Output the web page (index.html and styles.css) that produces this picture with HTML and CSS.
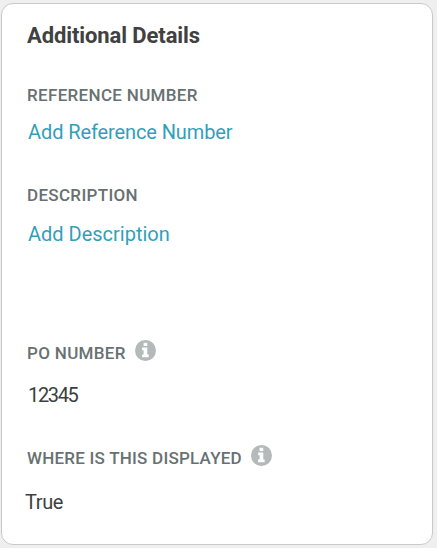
FILE: index.html
```html
<!DOCTYPE html>
<html lang="en">
<head>
<meta charset="utf-8">
<title>Additional Details</title>
<link rel="stylesheet" href="styles.css">
</head>
<body>
<main class="card">
<h1 class="title">Additional Details</h1>
<section class="field reference">
<h2 class="label">REFERENCE NUMBER</h2>
<a class="value link" href="#">Add Reference Number</a>
</section>
<section class="field description">
<h2 class="label">DESCRIPTION</h2>
<a class="value link" href="#">Add Description</a>
</section>
<section class="field po">
<h2 class="label">PO NUMBER
<svg class="info" viewBox="0 0 20 20"><circle cx="10" cy="10" r="10"/><path d="M8.2 2.5h3.5v3.2H8.2zM6.8 7.2h4.9v6.7H13v2.6H6.8v-2.6h1.4V9.8H6.8z"/></svg></h2>
<p class="value">12345</p>
</section>
<section class="field where">
<h2 class="label">WHERE IS THIS DISPLAYED
<svg class="info" viewBox="0 0 20 20"><circle cx="10" cy="10" r="10"/><path d="M8.2 2.5h3.5v3.2H8.2zM6.8 7.2h4.9v6.7H13v2.6H6.8v-2.6h1.4V9.8H6.8z"/></svg></h2>
<p class="value">True</p>
</section>
</main>
</body>
</html>
```
FILE: styles.css
```css
* { box-sizing: border-box; }
body { margin: 0; background: #efefef; font-family: Roboto, sans-serif; }
.card { width: 432px; height: 542px; margin: 3px 0 0 1px; padding: 18px 25px; background: #fff; border: 1px solid #c8caca; border-radius: 12px; }
.title { margin: 0; font-size: 22px; line-height: 28px; letter-spacing: -0.1px; color: #414141; font-weight: 700; }
.field { display: flex; flex-direction: column; align-items: flex-start; }
.label { display: flex; align-items: center; gap: 9px; margin: 0; font-size: 17px; line-height: 22px; letter-spacing: 0.32px; color: #687172; font-weight: 500; white-space: nowrap; }
.value { margin: 0; padding-left: 1px; font-size: 20px; line-height: 28px; color: #3b3f40; text-decoration: none; }
.link { color: #329fb9; }
.info { width: 21px; height: 21px; fill: #b3bab9; position: relative; top: -3px; }
.info path { fill: #fff; }
.reference { margin-top: 34px; }
.reference .value { margin-top: 12px; letter-spacing: -0.1px; }
.description { margin-top: 38px; }
.description .value { margin-top: 14px; }
.po { margin-top: 94px; }
.po .value { margin-top: 17px; letter-spacing: -1.35px; }
.where { margin-top: 38px; }
.where .label { letter-spacing: 0.23px; }
.where .value { margin: 19px 0 0 -2px; padding: 0; letter-spacing: -0.4px; }
```
